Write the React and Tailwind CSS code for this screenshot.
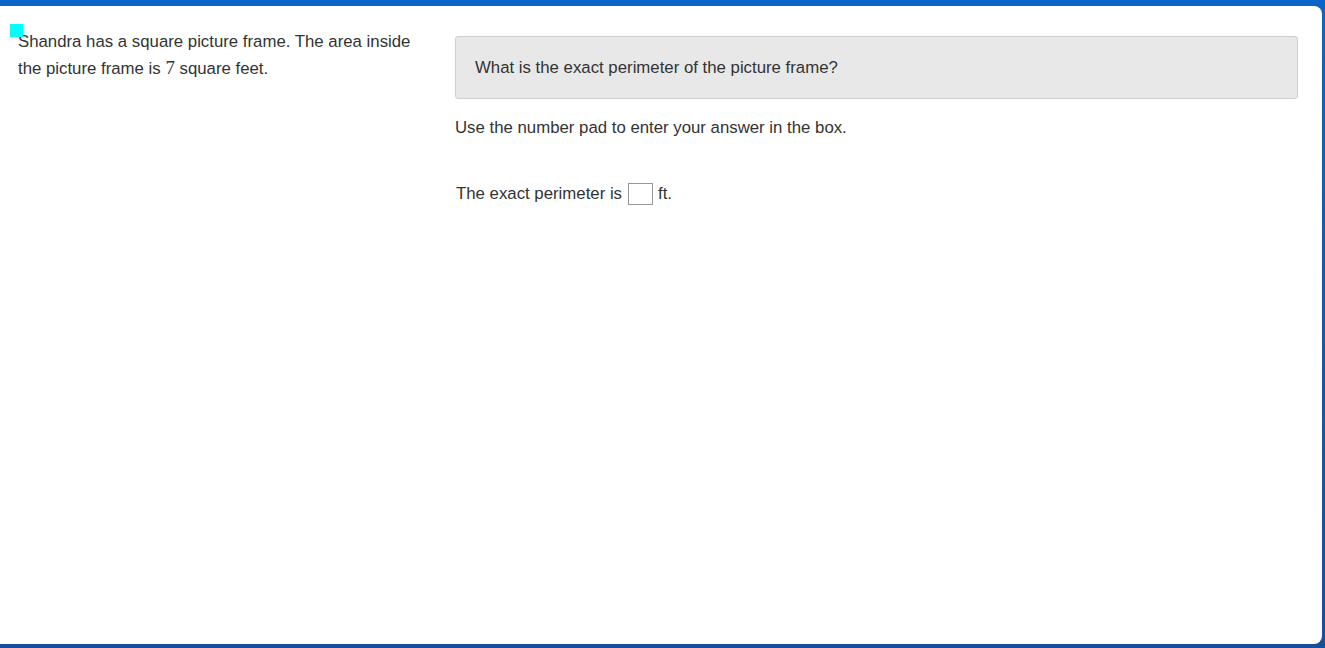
export default function App() {
  return (
    <div className="w-[1325px] h-[648px] bg-gradient-to-b from-[#0a64c8] to-[#17509a] pt-[6px] pr-[3px] pb-[4px] font-['Liberation_Sans',Arial,sans-serif] text-[#333]">
      <div className="relative h-full bg-white rounded-r-[8px] flex">
        {/* cyan marker */}
        <div className="absolute left-[10px] top-[18px] w-[13px] h-[13px] bg-[#00ffff]" />

        {/* Passage */}
        <div className="w-[455px] shrink-0 pl-[18px] pr-[20px] pt-[22px]">
          <p className="text-[16.8px] leading-[27px]">
            Shandra has a square picture frame. The area inside the picture frame is{" "}
            <span className="font-['Liberation_Serif',serif] text-[19px] leading-none">7</span> square feet.
          </p>
        </div>

        {/* Question */}
        <div className="flex-1 pt-[30px] pr-[24px]">
          <div className="bg-[#e8e8e8] border border-[#cfcfcf] rounded-[3px] h-[63px] px-[19px] pt-px flex items-center text-[16.8px]">
            What is the exact perimeter of the picture frame?
          </div>
          <p className="mt-[17px] text-[16.8px] leading-[24px]">
            Use the number pad to enter your answer in the box.
          </p>
          <div className="mt-[42px] pl-px flex items-center text-[16.8px] leading-[24px]">
            <span>The exact perimeter is</span>
            <span className="inline-block w-[25px] h-[22px] border border-[#999] bg-white ml-[6px] mr-[5px]" />
            <span>ft.</span>
          </div>
        </div>
      </div>
    </div>
  );
}
